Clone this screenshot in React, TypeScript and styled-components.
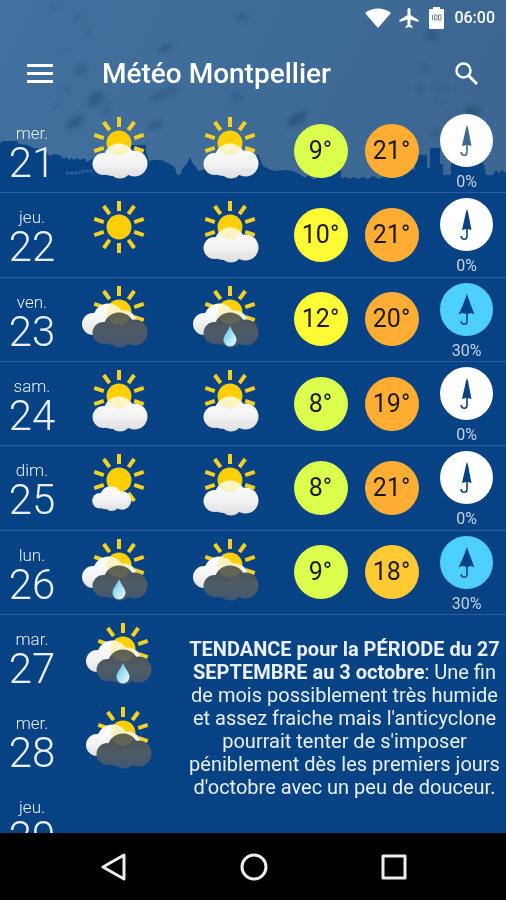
import React, { useId } from "react";
import styled, { createGlobalStyle } from "styled-components";

type Sky = "sun" | "fair" | "cloudy" | "overcast" | "rain";

interface Forecast {
  day: string;
  date: number;
  morning: Sky;
  afternoon: Sky;
  low: number;
  high: number;
  rain: number;
}

const FORECASTS: Forecast[] = [
  { day: "mer.", date: 21, morning: "cloudy", afternoon: "cloudy", low: 9, high: 21, rain: 0 },
  { day: "jeu.", date: 22, morning: "sun", afternoon: "cloudy", low: 10, high: 21, rain: 0 },
  { day: "ven.", date: 23, morning: "overcast", afternoon: "rain", low: 12, high: 20, rain: 30 },
  { day: "sam.", date: 24, morning: "cloudy", afternoon: "cloudy", low: 8, high: 19, rain: 0 },
  { day: "dim.", date: 25, morning: "fair", afternoon: "cloudy", low: 8, high: 21, rain: 0 },
  { day: "lun.", date: 26, morning: "rain", afternoon: "overcast", low: 9, high: 18, rain: 30 },
];

const TRENDS: { day: string; date: number; sky?: Sky }[] = [
  { day: "mar.", date: 27, sky: "rain" },
  { day: "mer.", date: 28, sky: "overcast" },
  { day: "jeu.", date: 29 },
];

const temperatureColor = (t: number) => {
  if (t >= 19) return "#ffad33";
  if (t >= 15) return "#ffca33";
  if (t >= 10) return "#fffb35";
  return "#dcff4e";
};

const GlobalStyle = createGlobalStyle`
  * { box-sizing: border-box; }
  body { margin: 0; background: #074284; }
`;

const Screen = styled.div`
  position: relative;
  isolation: isolate;
  display: flex;
  flex-direction: column;
  height: 100vh;
  overflow: hidden;
  background: #074284;
  color: #eaf0ff;
  font-family: Roboto, "Liberation Sans", sans-serif;
`;

const Backdrop = styled.svg`
  position: absolute;
  z-index: -1;
  top: 0;
  left: 0;
  width: 100%;
  height: 193px;
`;

const StatusBar = styled.div`
  display: flex;
  flex: none;
  align-items: center;
  justify-content: flex-end;
  height: 36px;
  padding-right: 11px;
  color: #fff;
`;

const StatusIcon = styled.svg`
  display: block;
  margin-right: 8px;
  fill: currentColor;
`;

const Clock = styled.time`
  font-size: 16px;
  font-weight: 500;
  line-height: 20px;
`;

const AppBar = styled.header`
  display: flex;
  flex: none;
  align-items: center;
  height: 73px;
  padding: 2px 16px 0 16px;
  color: #fff;
`;

const IconButton = styled.button`
  display: flex;
  align-items: center;
  justify-content: center;
  width: 48px;
  height: 48px;
  padding: 0;
  border: 0;
  background: none;
  color: inherit;
`;

const Title = styled.h1`
  flex: 1;
  margin: 0 0 0 38px;
  font-size: 28px;
  font-weight: 500;
  line-height: 32px;
`;

const Content = styled.main`
  flex: 1;
  min-height: 0;
  overflow: hidden;
`;

const ForecastList = styled.ul`
  display: grid;
  grid-auto-rows: 1fr;
  min-height: 506px;
  margin: 0;
  padding: 0;
  list-style: none;
`;

const ForecastRow = styled.li`
  display: grid;
  grid-template-columns: 64fr 110fr 111fr 71fr 71fr 79fr;
  align-items: center;
  justify-items: center;
  border-bottom: 1px solid #2a5c98;
`;

const DayCell = styled.div`
  align-self: start;
  padding-top: 14px;
  text-align: center;
`;

const DayName = styled.div`
  font-size: 17px;
  font-weight: 300;
  line-height: 20px;
`;

const DayNumber = styled.div`
  font-size: 42px;
  font-weight: 300;
  line-height: 40px;
`;

const WeatherSvg = styled.svg`
  display: block;
  align-self: start;
  width: 80px;
  height: 76px;
`;

const Temperature = styled.div<{ $degrees: number }>`
  display: flex;
  align-items: center;
  justify-content: center;
  width: 54px;
  height: 54px;
  border-radius: 50%;
  background: ${(p) => temperatureColor(p.$degrees)};
  color: #1c1a10;
  font-size: 25px;
  line-height: 30px;
`;

const RainCell = styled.div`
  display: flex;
  flex-direction: column;
  align-items: center;
  align-self: start;
  gap: 6px;
  padding-top: 5px;
`;

const RainBadge = styled.svg<{ $wet: boolean }>`
  display: block;
  width: 53px;
  height: 53px;
  fill: ${(p) => (p.$wet ? "#4dcfff" : "#fff")};
`;

const RainChance = styled.div`
  color: #c6d3ee;
  font-size: 16px;
  line-height: 18px;
`;

const Trends = styled.section`
  display: grid;
  grid-template-columns: 182fr 324fr;
`;

const TrendList = styled.ul`
  display: grid;
  grid-auto-rows: 84px;
  margin: 0;
  padding: 0;
  list-style: none;
`;

const TrendRow = styled.li`
  display: grid;
  grid-template-columns: 64fr 118fr;
  justify-items: center;
`;

const TrendText = styled.p`
  margin: 23px 4px 0 5px;
  font-size: 20px;
  line-height: 23px;
  text-align: center;
`;

const NavBar = styled.nav`
  display: flex;
  flex: none;
  align-items: center;
  justify-content: center;
  gap: 92px;
  height: 67px;
  padding-left: 2px;
  background: #000;
  color: #eee;
`;

const CLOUD = (
  <>
    <circle cx="24.5" cy="55" r="11" />
    <circle cx="40" cy="50" r="15.5" />
    <circle cx="55.5" cy="54.5" r="13" />
    <circle cx="41" cy="58.5" r="11" />
    <circle cx="32" cy="57" r="10" />
  </>
);

const RAY_ANGLES = [0, 36, 72, 108, 144, 180, 216, 252, 288, 324];
const FAR_CLOUD = "translate(-10.5 -9)";
const SMALL_CLOUD = "translate(3.6 15.7) scale(.71)";

function Cloud({ id, fill, transform, glow }: { id: string; fill: string; transform?: string; glow: number }) {
  return (
    <>
      <clipPath id={id}>
        {React.Children.map(CLOUD.props.children, (c: React.ReactElement<{ transform?: string }>) =>
          React.cloneElement(c, { transform }),
        )}
      </clipPath>
      <g transform={transform} fill={fill}>
        {CLOUD}
      </g>
      <circle cx="40" cy="34" r="12.5" fill="#ffe032" opacity={glow} clipPath={`url(#${id})`} />
    </>
  );
}

function WeatherIcon({ sky }: { sky: Sky }) {
  const id = useId();
  const light = `${id}-light`;
  const dark = `${id}-dark`;
  const drop = `${id}-drop`;
  const labels: Record<Sky, string> = {
    sun: "Ensoleillé",
    fair: "Peu nuageux",
    cloudy: "Nuageux",
    overcast: "Très nuageux",
    rain: "Averses",
  };
  const stormy = sky === "overcast" || sky === "rain";
  return (
    <WeatherSvg viewBox="0 0 80 76" role="img" aria-label={labels[sky]}>
      <defs>
        <linearGradient id={light} gradientUnits="userSpaceOnUse" x1="0" y1="36" x2="0" y2="70">
          <stop offset="0" stopColor="#fff" />
          <stop offset=".5" stopColor="#f4f4f5" />
          <stop offset="1" stopColor="#dddde0" />
        </linearGradient>
        <linearGradient id={dark} gradientUnits="userSpaceOnUse" x1="0" y1="36" x2="0" y2="70">
          <stop offset="0" stopColor="#4b5154" />
          <stop offset=".5" stopColor="#505b66" />
          <stop offset="1" stopColor="#40566f" />
        </linearGradient>
        <linearGradient id={drop} x1="0" y1="0" x2="1" y2="1">
          <stop offset="0" stopColor="#4fb9e6" />
          <stop offset=".5" stopColor="#a5e2f6" />
          <stop offset="1" stopColor="#f0fbff" />
        </linearGradient>
      </defs>
      <g stroke="#f6d022" strokeWidth="4">
        {RAY_ANGLES.map((a) => (
          <line key={a} x1="40" y1="8" x2="40" y2="18" transform={`rotate(${a} 40 34)`} />
        ))}
      </g>
      <circle cx="40" cy="34" r="12.5" fill="#ffcf05" />
      {sky === "fair" && <Cloud id={`${id}-a`} fill={`url(#${light})`} transform={SMALL_CLOUD} glow={0.12} />}
      {sky === "cloudy" && <Cloud id={`${id}-a`} fill={`url(#${light})`} glow={0.28} />}
      {stormy && (
        <>
          <Cloud id={`${id}-a`} fill={`url(#${light})`} transform={FAR_CLOUD} glow={0.28} />
          <Cloud id={`${id}-b`} fill={`url(#${dark})`} glow={0.12} />
        </>
      )}
      {sky === "rain" && (
        <path
          d="M40 48C38 54 33.500 57 33.500 62A6.500 6.500 0 0 0 46.500 62C46.500 57 42 54 40 48Z"
          fill={`url(#${drop})`}
        />
      )}
    </WeatherSvg>
  );
}

/* The umbrella is punched out of the disc so that the backdrop shows through. */
const DISC = "M26.500 0A26.500 26.500 0 1 1 26.500 53A26.500 26.500 0 1 1 26.500 0Z";
const HANDLE =
  "V38C27.800 41 26.300 42 24.300 42C22 42 20.300 40.500 20.300 38H22C22 39.500 22.900 40.400 24.200 40.400C25.500 40.400 26.200 39.600 26.200 38V";
const CLOSED = `M27 11L28 14L31.500 32L27.800 31${HANDLE}31L22 32L26 14Z`;
const OPEN = `M26.800 11L28 14C30 20 32.500 26 34.500 31.500L31 30L27.800 31${HANDLE}31L22.500 30L18.500 31.500C21 26 24 20 25.800 14Z`;

function Rain({ chance }: { chance: number }) {
  const wet = chance > 0;
  return (
    <RainCell>
      <RainBadge $wet={wet} viewBox="0 0 53 53" aria-hidden="true">
        <path fillRule="evenodd" d={`${DISC}${wet ? OPEN : CLOSED}`} />
      </RainBadge>
      <RainChance>{chance}%</RainChance>
    </RainCell>
  );
}

function Day({ day, date }: { day: string; date: number }) {
  return (
    <DayCell>
      <DayName>{day}</DayName>
      <DayNumber>{date}</DayNumber>
    </DayCell>
  );
}

const DROPS = [
  [166, 48, 8, 4, -20, 0.4],
  [81, 70, 7, 4, -30, 0.4],
  [96, 99, 9, 6, -40, 0.5],
  [75, 122, 10, 5, -35, 0.5],
  [165, 94, 17, 4, -22, 0.3],
  [155, 125, 8, 4, -20, 0.45],
  [106, 110, 3, 8, 0, 0.25],
  [242, 17, 6, 4, 10, 0.35],
  [237, 97, 6, 5, 20, 0.3],
  [297, 119, 11, 5, -35, 0.6],
  [432, 36, 7, 5, 10, 0.45],
  [425, 68, 5, 3, 20, 0.35],
  [441, 88, 6, 2, 0, 0.35],
  [420, 88, 4, 3, 0, 0.3],
  [439, 101, 4, 3, 0, 0.25],
  [473, 111, 9, 5, 0, 0.55],
  [435, 133, 5, 3, 0, 0.4],
  [55, 7, 5, 2, -20, 0.25],
  [79, 17, 6, 3, -30, 0.25],
  [88, 32, 5, 3, -30, 0.25],
  [66, 51, 4, 2, -30, 0.2],
  [66, 89, 4, 3, -30, 0.25],
  [57, 107, 4, 2, -30, 0.25],
];

function RainySkyline() {
  return (
    <Backdrop viewBox="0 0 506 193" preserveAspectRatio="none" aria-hidden="true">
      <defs>
        <linearGradient id="sky" x1="0" y1="0" x2="1" y2=".2">
          <stop offset="0" stopColor="#42719f" />
          <stop offset="1" stopColor="#3d6792" />
        </linearGradient>
        <filter id="soft" x="-50%" y="-50%" width="200%" height="200%">
          <feGaussianBlur stdDeviation="2" />
        </filter>
      </defs>
      <rect width="506" height="193" fill="url(#sky)" />
      <g fill="#254a70" filter="url(#soft)">
        {DROPS.map(([x, y, rx, ry, angle, opacity]) => (
          <ellipse
            key={`${x}-${y}`}
            cx={x}
            cy={y}
            rx={rx}
            ry={ry}
            opacity={opacity}
            transform={`rotate(${angle} ${x} ${y})`}
          />
        ))}
      </g>
      <path
        fill="#074284"
        d="M0 143L3 141H17L19 144L28 145L33 148L42 149L46 152L50 156L54 154L60 155L64 159L66 157L69 160L71 158L74 160L77 158L80 160L84 158L87 162L94 158L112 155L120 150L130 151L131 145H146V152L149 161L154 160H162L170 164L175 168L177 175H180L183 168L187 164L190 157L193 164L197 168V171L203 170L215 166L250 162L258 154L263 166L271 170L277 171L285 170L293 171L299 174L305 178L309 175L314 180L322 170H341V178L346 177L349 179L354 177L358 179L363 177L368 179L373 176L379 179L384 176L390 177L393 170L404 174L410 169L415 170V158L418 155H427V168H430V148H440V164H443V175H451V164L455 160L468 156L484 164L486 175H493L496 170L499 173L502 170L506 173V193H0Z"
      />
      <path d="M66 173H78L84 171H92" stroke="#3f6c9f" strokeWidth="3" strokeDasharray="3 1" fill="none" opacity=".7" />
    </Backdrop>
  );
}

export default function App() {
  return (
    <Screen>
      <GlobalStyle />
      <RainySkyline />
      <StatusBar>
        <StatusIcon width="26" height="20" viewBox="0 0 26 20" role="img" aria-label="Wi-Fi">
          <path d="M0 5C7-1 19-1 26 5L13 20Z" />
        </StatusIcon>
        <StatusIcon width="20" height="22" viewBox="2 1 20 22" role="img" aria-label="Mode avion">
          <path d="M21.500 16v-2l-8-5V3.500a1.500 1.500 0 0 0-3 0V9l-8 5v2l8-2.500V19l-2 1.500V22l3.500-1 3.500 1v-1.500L13.500 19v-5.500z" />
        </StatusIcon>
        <StatusIcon width="19" height="22" viewBox="-2 0 19 22" role="img" aria-label="Batterie">
          <path d="M4 0H11V2H14Q15 2 15 3V21Q15 22 14 22H1Q0 22 0 21V3Q0 2 1 2H4Z" />
          <path d="M3.500 8V13M5.500 8H8V13H5.500ZM9.500 8H12V13H9.500Z" fill="none" stroke="#7b8797" strokeWidth="1" />
        </StatusIcon>
        <Clock>06:00</Clock>
      </StatusBar>
      <AppBar>
        <IconButton type="button" aria-label="Menu">
          <svg width="28" height="20" viewBox="0 0 28 20" fill="currentColor" aria-hidden="true">
            <path d="M1 0H27V3H1ZM1 8H27V11H1ZM1 16H27V19H1Z" />
          </svg>
        </IconButton>
        <Title>Météo Montpellier</Title>
        <IconButton type="button" aria-label="Rechercher">
          <svg width="24" height="24" viewBox="0 0 24 24" fill="none" stroke="currentColor" aria-hidden="true">
            <circle cx="9.500" cy="8.500" r="7" strokeWidth="2.500" />
            <path d="M14.500 13.500L23 22" strokeWidth="3" />
          </svg>
        </IconButton>
      </AppBar>
      <Content>
        <ForecastList>
          {FORECASTS.map((f) => (
            <ForecastRow key={f.date}>
              <Day day={f.day} date={f.date} />
              <WeatherIcon sky={f.morning} />
              <WeatherIcon sky={f.afternoon} />
              <Temperature $degrees={f.low}>{f.low}°</Temperature>
              <Temperature $degrees={f.high}>{f.high}°</Temperature>
              <Rain chance={f.rain} />
            </ForecastRow>
          ))}
        </ForecastList>
        <Trends>
          <TrendList>
            {TRENDS.map((t) => (
              <TrendRow key={t.date}>
                <Day day={t.day} date={t.date} />
                {t.sky && <WeatherIcon sky={t.sky} />}
              </TrendRow>
            ))}
          </TrendList>
          <TrendText>
            <strong>TENDANCE pour la PÉRIODE du 27 SEPTEMBRE au 3 octobre</strong>: Une fin de mois possiblement très
            humide et assez fraiche mais l'anticyclone pourrait tenter de s'imposer péniblement dès les premiers jours
            d'octobre avec un peu de douceur.
          </TrendText>
        </Trends>
      </Content>
      <NavBar aria-label="Navigation système">
        <IconButton type="button" aria-label="Retour">
          <svg width="28" height="28" viewBox="0 0 28 28" fill="none" stroke="currentColor" strokeWidth="3" strokeLinejoin="round" aria-hidden="true">
            <path d="M24 2V26L3 14Z" />
          </svg>
        </IconButton>
        <IconButton type="button" aria-label="Accueil">
          <svg width="28" height="28" viewBox="0 0 28 28" fill="none" stroke="currentColor" strokeWidth="3" aria-hidden="true">
            <circle cx="14" cy="14" r="12" />
          </svg>
        </IconButton>
        <IconButton type="button" aria-label="Applications récentes">
          <svg width="28" height="28" viewBox="0 0 28 28" fill="none" stroke="currentColor" strokeWidth="3" strokeLinejoin="round" aria-hidden="true">
            <rect x="3" y="3" width="22" height="22" />
          </svg>
        </IconButton>
      </NavBar>
    </Screen>
  );
}
